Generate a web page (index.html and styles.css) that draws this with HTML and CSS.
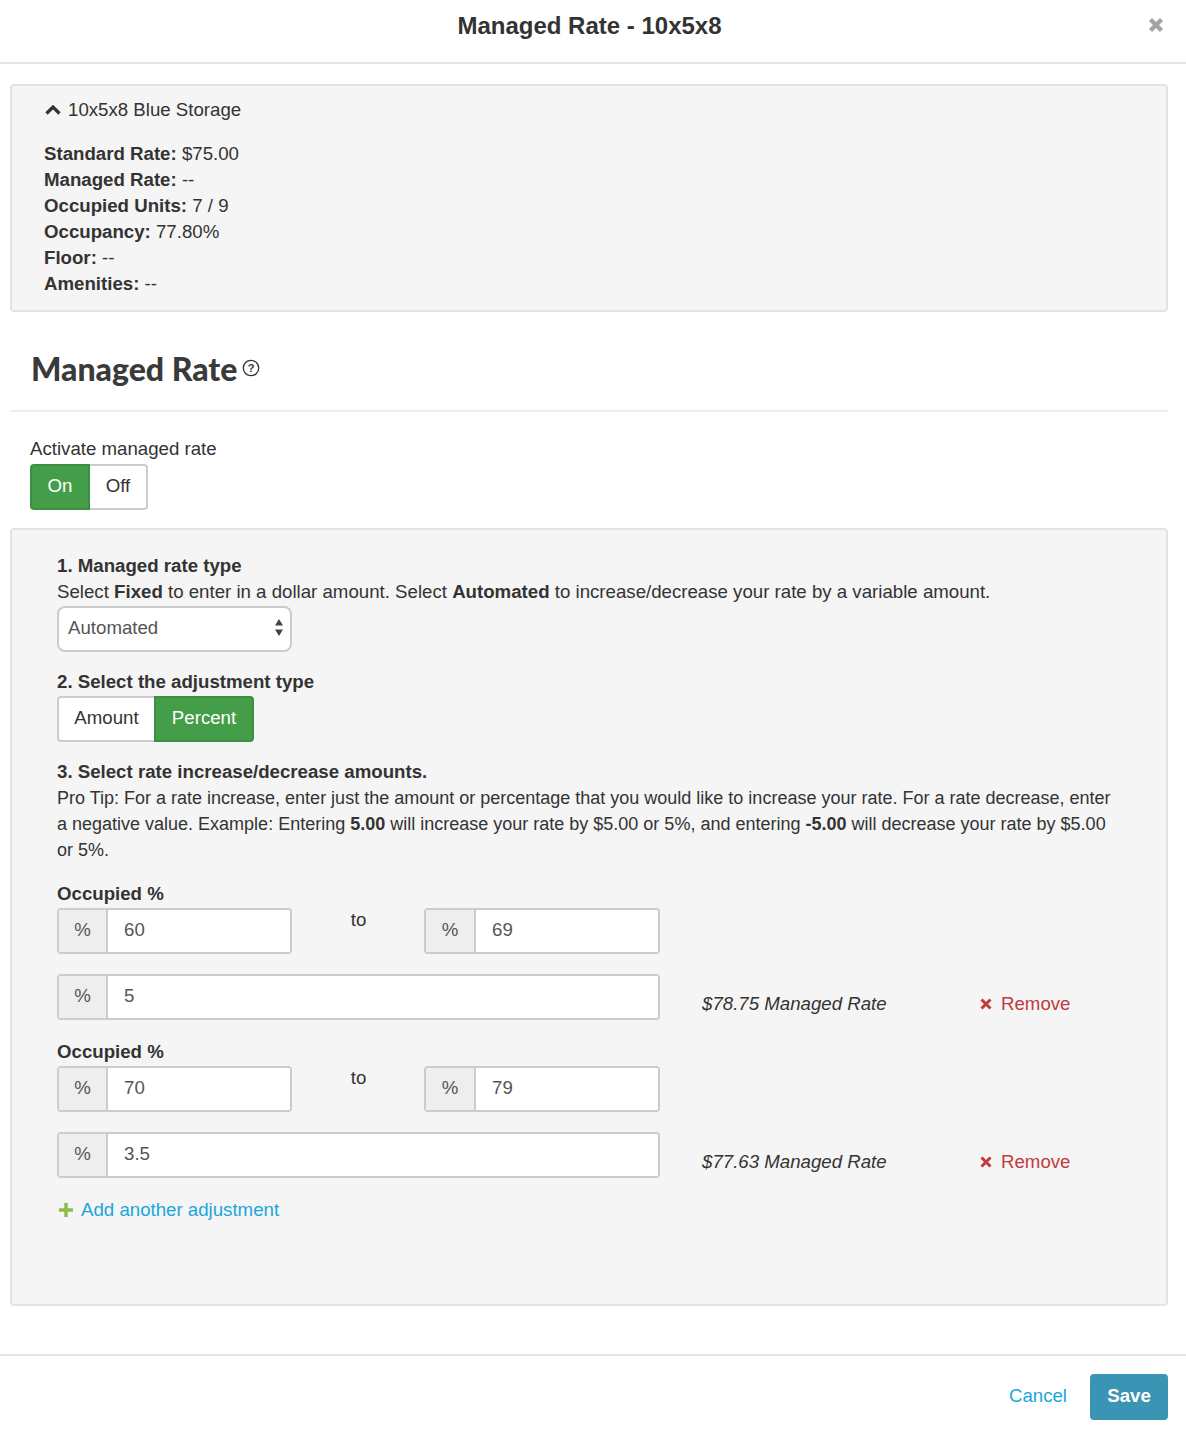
FILE: index.html
```html
<!DOCTYPE html>
<html lang="en">
<head>
    <meta charset="UTF-8">
    <meta name="viewport" content="width=device-width, initial-scale=1.0">
    <title>Managed Rate - 10x5x8</title>
    <link rel="stylesheet" href="styles.css">
</head>
<body>
    <header class="modal-header">
        <h1>Managed Rate - 10x5x8</h1>
        <button type="button" class="close" aria-label="Close">
            <svg width="16" height="16" viewBox="0 0 16 16"><path d="M2.500 2.500l11 11M13.500 2.500l-11 11" stroke="#a3a3a3" stroke-width="4.4" fill="none"/></svg>
        </button>
    </header>

    <main class="modal-body">
        <section class="panel unit">
            <div class="unit-title">
                <svg width="16" height="10" viewBox="0 0 16 10"><path d="M1.500 8.500L8 2l6.500 6.500" stroke="#333" stroke-width="3.200" fill="none"/></svg>
                10x5x8 Blue Storage
            </div>
            <ul class="unit-info">
                <li><b>Standard Rate:</b> $75.00</li>
                <li><b>Managed Rate:</b> --</li>
                <li><b>Occupied Units:</b> 7 / 9</li>
                <li><b>Occupancy:</b> 77.80%</li>
                <li><b>Floor:</b> --</li>
                <li><b>Amenities:</b> --</li>
            </ul>
        </section>

        <div class="section-head">
            <h2>Managed Rate</h2>
            <svg class="help" width="18" height="18" viewBox="0 0 18 18">
                <circle cx="9" cy="9" r="7.7" fill="none" stroke="#333" stroke-width="1.3"/>
                <text x="9" y="12.6" text-anchor="middle" class="help-mark">?</text>
            </svg>
        </div>

        <div class="activate">
            <label>Activate managed rate</label>
            <div class="toggle">
                <button type="button" class="active on-btn">On</button>
                <button type="button" class="off-btn">Off</button>
            </div>
        </div>

        <section class="panel settings">
            <h3>1. Managed rate type</h3>
            <p>Select <b>Fixed</b> to enter in a dollar amount. Select <b>Automated</b> to increase/decrease your rate by a variable amount.</p>
            <div class="select-wrap">
                <select>
                    <option>Automated</option>
                    <option>Fixed</option>
                </select>
                <svg class="select-arrows" width="10" height="18" viewBox="0 0 10 18"><path d="M5 1l4 6.500H1zM5 18l-4-6.500h8z" fill="#444"/></svg>
            </div>

            <h3 class="step">2. Select the adjustment type</h3>
            <div class="toggle adjust-toggle">
                <button type="button" class="amount-btn">Amount</button>
                <button type="button" class="active percent-btn">Percent</button>
            </div>

            <h3 class="step">3. Select rate increase/decrease amounts.</h3>
            <p class="tip">Pro Tip: For a rate increase, enter just the amount or percentage that you would like to increase your rate. For a rate decrease, enter a negative value. Example: Entering <b>5.00</b> will increase your rate by $5.00 or 5%, and entering <b>-5.00</b> will decrease your rate by $5.00 or 5%.</p>

            <div class="adjustment">
                <h3>Occupied %</h3>
                <div class="range">
                    <div class="input-group"><span>%</span><input type="text" value="60"></div>
                    <div class="to">to</div>
                    <div class="input-group"><span>%</span><input type="text" value="69"></div>
                </div>
                <div class="result">
                    <div class="input-group wide"><span>%</span><input type="text" value="5"></div>
                    <em class="rate">$78.75 Managed Rate</em>
                    <a class="remove" href="#"><svg width="12" height="12" viewBox="0 0 12 12"><path d="M1.500 1.500l9 9M10.500 1.500l-9 9" stroke="#c13b3f" stroke-width="3" fill="none"/></svg>Remove</a>
                </div>
            </div>

            <div class="adjustment">
                <h3>Occupied %</h3>
                <div class="range">
                    <div class="input-group"><span>%</span><input type="text" value="70"></div>
                    <div class="to">to</div>
                    <div class="input-group"><span>%</span><input type="text" value="79"></div>
                </div>
                <div class="result">
                    <div class="input-group wide"><span>%</span><input type="text" value="3.5"></div>
                    <em class="rate">$77.63 Managed Rate</em>
                    <a class="remove" href="#"><svg width="12" height="12" viewBox="0 0 12 12"><path d="M1.500 1.500l9 9M10.500 1.500l-9 9" stroke="#c13b3f" stroke-width="3" fill="none"/></svg>Remove</a>
                </div>
            </div>

            <a class="add" href="#"><svg width="14" height="14" viewBox="0 0 14 14"><path d="M7 0v14M0 7h14" stroke="#8dbb46" stroke-width="3.4" fill="none"/></svg>Add another adjustment</a>
        </section>
    </main>

    <footer class="modal-footer">
        <a class="cancel" href="#">Cancel</a>
        <button type="button" class="save">Save</button>
    </footer>
</body>
</html>
```

FILE: styles.css
```css
* { box-sizing: border-box; }
body { margin: 0; font-family: "Liberation Sans", Arial, sans-serif; font-size: 18.67px; line-height: 26px; color: #333; background: #fff; }
h1, h2, h3, p, ul { margin: 0; padding: 0; }
b, h3 { font-weight: bold; }
h3 { font-size: inherit; }
a { text-decoration: none; }

.modal-header { position: relative; height: 64px; border-bottom: 2px solid #e5e5e5; text-align: center; }
.modal-header h1 { font-size: 24px; line-height: 52px; font-weight: bold; padding-right: 7px; }
.close { position: absolute; top: 17px; right: 22px; width: 16px; height: 16px; padding: 0; border: 0; background: none; }
.close svg { display: block; }

.modal-body { padding: 20px 18px 48px 10px; }
.panel { background: #f5f5f5; border: 2px solid #e3e3e3; border-radius: 4px; }

.unit { height: 228px; padding: 11px 32px; }
.unit-title { height: 26px; display: flex; align-items: center; gap: 7px; padding-left: 1px; }
.unit-info { list-style: none; margin-top: 18px; }

.section-head { height: 100px; padding: 39px 0 0 21px; border-bottom: 2px solid #eee; display: flex; align-items: flex-start; }
.section-head h2 { font-family: Lato, "Liberation Sans", sans-serif; font-size: 32px; line-height: 36px; font-weight: 900; color: #3a3a3a; }
.help { margin: 8px 0 0 5px; }
.help-mark { font-size: 11px; font-weight: bold; fill: #333; }

.activate { padding: 24px 0 18px 20px; }
.activate label { display: block; margin-bottom: 2px; }

.toggle { display: flex; height: 46px; }
.toggle button { font: inherit; color: #333; background: #fff; border: 2px solid #ccc; padding: 0 0 2px; }
.toggle .active { color: #fff; background: #449d48; border-color: #3f8f43; }
.adjust-toggle { margin-top: 1px; }
.on-btn { width: 60px; border-radius: 4px 0 0 4px; }
.off-btn { width: 58px; border-left: 0 !important; border-radius: 0 4px 4px 0; }
.amount-btn { width: 97px; border-right: 0 !important; border-radius: 4px 0 0 4px; }
.percent-btn { width: 100px; border-radius: 0 4px 4px 0; }

.settings { height: 778px; padding: 23px 45px; }
.step { margin-top: 17px; }
.tip { font-size: 18px; }

.select-wrap { position: relative; width: 235px; height: 46px; margin-top: 1px; }
.select-wrap select { width: 100%; height: 100%; padding: 0 9px 2px; font: inherit; color: #555; background: #fff; border: 2px solid #ccc; border-radius: 8px; appearance: none; }
.select-arrows { position: absolute; top: 12px; right: 8px; }

.adjustment { margin-top: 18px; width: 1020px; }
.adjustment + .adjustment { margin-top: 19px; }
.range { display: flex; width: 603px; margin-top: 1px; }
.to { width: 132px; padding-left: 1px; text-align: center; margin-top: -1px; }
.input-group { display: flex; width: 235px; height: 46px; border: 2px solid #ccc; border-radius: 4px; background: #fff; overflow: hidden; flex: none; }
.range .input-group:last-child { width: 236px; }
.range .input-group:last-child span { width: 50px; }
.input-group span { width: 49px; flex: none; text-align: center; line-height: 40px; color: #555; background: #eee; border-right: 2px solid #ccc; }
.input-group input { flex: 1; min-width: 0; border: 0; padding: 0 16px 2px; font: inherit; color: #555; background: #fff; }
.input-group.wide { width: 603px; }
.result { display: flex; margin-top: 20px; }
.rate { width: 278px; margin-left: 42px; padding-top: 17px; }
.remove { display: flex; align-items: center; gap: 9px; height: 26px; margin-top: 17px; color: #c13b3f; }

.add { display: inline-flex; align-items: center; gap: 8px; height: 26px; margin-top: 19px; padding-left: 2px; color: #1ba6dc; }

.modal-footer { height: 76px; border-top: 2px solid #e5e5e5; display: flex; justify-content: flex-end; align-items: flex-start; padding: 18px 18px 0 0; }
.cancel { color: #1ba6dc; margin-top: 9px; margin-right: 23px; }
.save { width: 78px; height: 46px; padding: 0 0 2px; font: inherit; font-weight: bold; color: #fff; background: #3a94b3; border: 0; border-radius: 4px; }
```
